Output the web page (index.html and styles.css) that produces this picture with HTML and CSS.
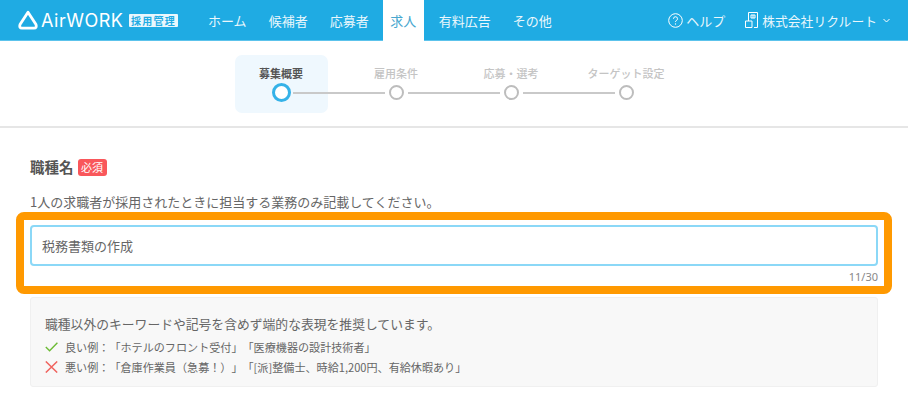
FILE: index.html
```html
<!DOCTYPE html>
<html lang="ja">
<head>
<meta charset="utf-8">
<title>AirWORK 採用管理</title>
<link rel="stylesheet" href="styles.css">
</head>
<body>
<header class="topbar">
  <div class="brand">
    <svg class="brand-mark" width="20" height="20" viewBox="0 0 20 20"><path d="M10 2.2 L18 14.6 Q19 18 16 18.2 L4 18.2 Q1 18 2 14.6 Z" fill="none" stroke="#fff" stroke-width="2.8" stroke-linejoin="round"/></svg>
    <span class="brand-name">AirWORK</span>
    <span class="brand-tag">採用管理</span>
  </div>
  <nav class="nav">
    <a class="nav-item">ホーム</a>
    <a class="nav-item">候補者</a>
    <a class="nav-item">応募者</a>
    <a class="nav-item is-active">求人</a>
    <a class="nav-item">有料広告</a>
    <a class="nav-item">その他</a>
  </nav>
  <div class="account">
    <span class="account-item">
      <svg width="15" height="15" viewBox="0 0 15 15"><circle cx="7.5" cy="7.5" r="6.8" fill="none" stroke="#fff" stroke-width="1"/><path d="M5.5 5.8 A2 2 0 1 1 8.2 7.6 Q7.5 8 7.5 9" fill="none" stroke="#fff" stroke-width="1"/><circle cx="7.5" cy="11" r=".7" fill="#fff"/></svg>
      ヘルプ
    </span>
    <span class="account-item company">
      <svg width="13" height="16" viewBox="0 0 13 16"><path d="M3.5 9 V.5 H12.5 V15.5 H9 M.5 15.5 V9 H7 V15.5 H.5 M6 3 H10 V6 H6 Z M8 3 V6" fill="none" stroke="#fff" stroke-width="1"/></svg>
      <span>株式会社リクルート</span>
      <svg class="chevron" width="7" height="5" viewBox="0 0 7 5"><path d="M.5 1 L3.5 4 L6.5 1" fill="none" stroke="#fff" stroke-width="1"/></svg>
    </span>
  </div>
</header>

<section class="stepper">
  <div class="step is-current"><span class="step-label">募集概要</span><span class="step-dot"></span></div>
  <div class="step"><span class="step-label">雇用条件</span><span class="step-dot"></span></div>
  <div class="step"><span class="step-label">応募・選考</span><span class="step-dot"></span></div>
  <div class="step"><span class="step-label">ターゲット設定</span><span class="step-dot"></span></div>
</section>

<main class="content">
  <div class="field-title">
    <h2 class="field-name">職種名</h2>
    <span class="required">必須</span>
  </div>
  <p class="field-help">1人の求職者が採用されたときに担当する業務のみ記載してください。</p>
  <div class="highlight">
    <div class="input">税務書類の作成</div>
    <div class="counter">11/30</div>
  </div>
  <aside class="tips">
    <p class="tips-lead">職種以外のキーワードや記号を含めず端的な表現を推奨しています。</p>
    <p class="tips-row">
      <svg class="tips-icon" width="13" height="10" viewBox="0 0 13 10"><path d="M.8 5 L4.6 8.8 L12.4 .8" fill="none" stroke="#6cbb35" stroke-width="1.4"/></svg>
      良い例：「ホテルのフロント受付」「医療機器の設計技術者」
    </p>
    <p class="tips-row">
      <svg class="tips-icon" width="13" height="12" viewBox="0 0 13 12"><path d="M.8 .4 L12.2 11.6 M12.2 .4 L.8 11.6" fill="none" stroke="#f0645f" stroke-width="1.4"/></svg>
      悪い例：「倉庫作業員（急募！）」「[派]整備士、時給1,200円、有給休暇あり」
    </p>
  </aside>
</main>
</body>
</html>
```
FILE: styles.css
```css
* { box-sizing: border-box; }
html, body { margin: 0; padding: 0; }
body {
  width: 908px;
  height: 411px;
  overflow: hidden;
  background: #fff;
  color: #555;
  font-family: "Noto Sans CJK JP", "Noto Sans", sans-serif;
  text-spacing-trim: space-all;
}
p, h2 { margin: 0; }

.topbar {
  display: flex;
  align-items: center;
  height: 41px;
  padding-left: 18px;
  background: #1fabe3;
  border-bottom: 1px solid #5cc3ec;
  color: #fff;
}
.brand { display: flex; align-items: center; width: 179px; flex: none; }
.brand-mark { flex: none; }
.brand-name {
  width: 87px;
  margin-left: 3px;
  font-family: "Inter", sans-serif;
  font-size: 18px;
  font-weight: 400;
  letter-spacing: .5px;
}
.brand-tag {
  width: 49px;
  height: 13px;
  margin-left: 1px;
  background: #e9f7fd;
  border-radius: 1px;
  color: #1fabe3;
  font-size: 10px;
  font-weight: 700;
  line-height: 13px;
  text-align: center;
  letter-spacing: 1.2px;
}
.nav { display: flex; height: 41px; }
.nav-item {
  display: flex;
  align-items: center;
  padding: 0 11px;
  font-size: 13px;
  color: #eaf7fc;
  white-space: nowrap;
}
.nav-item.is-active {
  height: 41px;
  padding: 0 7.5px;
  background: #fff;
  color: #48a7cf;
  margin: 0 4px 0 3px;
}
.account {
  display: flex;
  align-items: center;
  gap: 20px;
  margin-left: auto;
  margin-right: 18px;
}
.account-item {
  display: flex;
  align-items: center;
  gap: 3px;
  font-size: 13px;
  color: #eaf7fc;
  white-space: nowrap;
}
.company { gap: 4px; font-size: 12.8px; }
.chevron { margin-left: 2px; }

.stepper {
  display: flex;
  justify-content: center;
  height: 87px;
  padding-top: 14px;
  border-bottom: 2px solid #e6e6e6;
}
.step {
  position: relative;
  display: flex;
  flex-direction: column;
  align-items: center;
  width: 115px;
  height: 58px;
  padding-top: 11px;
}
.step:first-child { margin-left: -1px; }
.step.is-current::before {
  content: "";
  position: absolute;
  left: 11px;
  top: 0;
  width: 93px;
  height: 58px;
  border-radius: 7px;
  background: #eff8fe;
}
.step:not(:last-child)::after {
  content: "";
  position: absolute;
  left: 69px;
  top: 37px;
  width: 92px;
  height: 2px;
  background: #c9c9c9;
}
.step-label {
  position: relative;
  font-size: 11px;
  line-height: 15px;
  font-weight: 500;
  color: #c4c4c4;
  white-space: nowrap;
}
.is-current .step-label { color: #555; font-weight: 700; }
.step-dot {
  position: relative;
  width: 15px;
  height: 15px;
  margin-top: 4px;
  border: 2px solid #bdbdbd;
  border-radius: 50%;
  background: #fff;
}
.is-current .step-dot {
  width: 19px;
  height: 19px;
  margin-top: 2px;
  border: 3px solid #35b2e8;
}

.content { padding: 28px 30px 0; }
.field-title { display: flex; align-items: center; gap: 4px; height: 22px; }
.field-name { font-size: 14.5px; font-weight: 700; color: #555; line-height: 22px; }
.required {
  width: 29px;
  height: 17px;
  border-radius: 3px;
  background: #f9575b;
  color: #fff;
  font-size: 11px;
  line-height: 17px;
  text-align: center;
}
.field-help { margin-top: 15px; font-size: 13px; line-height: 18px; color: #666; }
.highlight {
  margin: 1px -14px 0;
  height: 82px;
  padding: 5px 6px 0;
  border: 8px solid #ff9900;
  border-radius: 8px;
}
.input {
  height: 41px;
  padding-left: 10px;
  border: 2px solid #8bd8f7;
  border-radius: 4px;
  font-size: 13px;
  line-height: 37px;
  color: #666;
}
.counter {
  margin-top: 3px;
  font-family: "Noto Sans", sans-serif;
  font-size: 11px;
  line-height: 15px;
  text-align: right;
  color: #888;
}
.tips {
  height: 90px;
  margin-top: 3px;
  padding: 17px 14px 0;
  border: 1px solid #f0f0f0;
  border-radius: 3px;
  background: #f8f8f8;
}
.tips-lead { font-size: 12.8px; line-height: 18px; color: #666; }
.tips-row {
  display: flex;
  align-items: center;
  gap: 7px;
  height: 20px;
  font-size: 11.1px;
  line-height: 18px;
  color: #666;
  white-space: nowrap;
}
.tips-lead + .tips-row { margin-top: 4px; }
```
